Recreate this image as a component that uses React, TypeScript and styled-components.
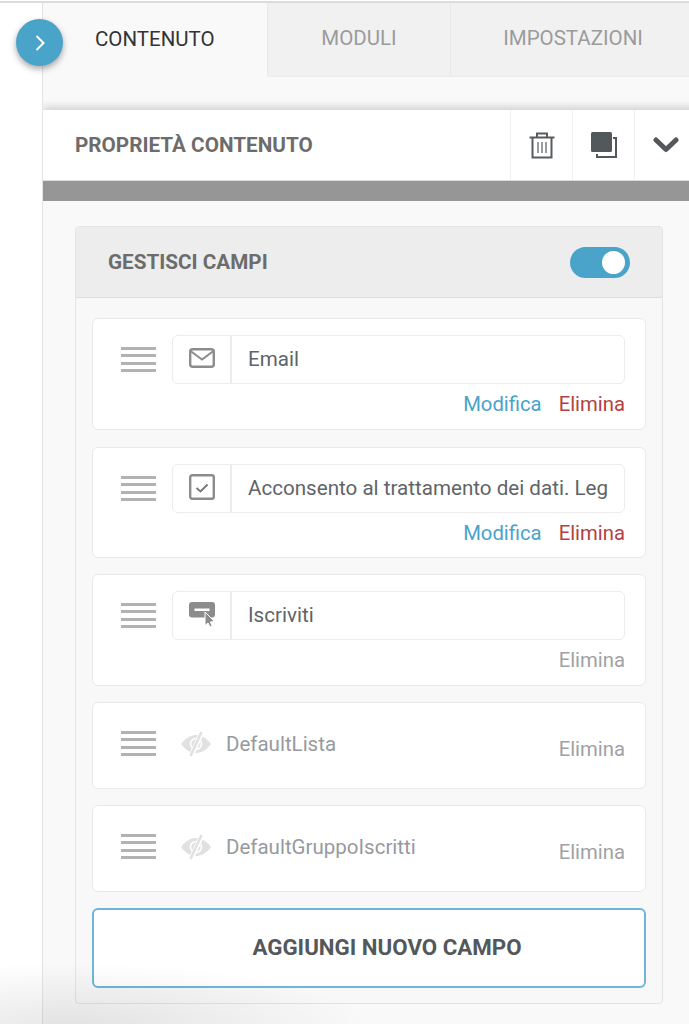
import React from 'react'
import styled, { createGlobalStyle } from 'styled-components';

const GlobalStyle = createGlobalStyle`
    html, body {
        margin: 0;
        padding: 0;
        background: #fff;
        font-family: Roboto, "Liberation Sans", sans-serif;
    }
    * {
        box-sizing: border-box;
    }
`;

const Page = styled.div`
    position: relative;
    width: 689px;
    height: 1024px;
    overflow: hidden;
    display: flex;
    background: #fff;
    border-top: 2px solid #dcdcdc;
    margin-top: 1px;
    &::after {
        content: '';
        position: absolute;
        left: 0;
        bottom: 0;
        width: 380px;
        height: 70px;
        background: radial-gradient(ellipse 300px 62px at 70px 100%, rgba(0,0,0,0.09), rgba(0,0,0,0));
        pointer-events: none;
    }
`;

const Rail = styled.div`
    flex: 0 0 42px;
`;

const ToggleRail = styled.button`
    position: absolute;
    left: 16px;
    top: 16px;
    width: 47px;
    height: 47px;
    border: none;
    padding: 0;
    border-radius: 50%;
    background: #4aa3c9;
    box-shadow: 0 3px 6px rgba(0, 0, 0, 0.35);
    display: flex;
    align-items: center;
    justify-content: center;
    z-index: 2;
`;

const Main = styled.div`
    flex: 1;
    min-width: 0;
    overflow: hidden;
    background: #f9f9f9;
    border-left: 1px solid #e4e4e4;
`;

const Tabs = styled.div`
    display: grid;
    grid-template-columns: 224px 183px 1fr;
    height: 74px;
`;

const Tab = styled.div<{ $active?: boolean; $shift?: number }>`
    display: flex;
    align-items: center;
    justify-content: ${props => props.$active ? 'flex-start' : 'center'};
    padding: 0 0 3px ${props => props.$active ? 52 : props.$shift || 0}px;
    font-size: 20.5px;
    color: ${props => props.$active ? '#333' : '#9b9b9b'};
    background: ${props => props.$active ? '#f9f9f9' : '#f1f1f1'};
    border-left: ${props => props.$active ? 'none' : '1px solid #e8e8e8'};
    border-bottom: ${props => props.$active ? 'none' : '1px solid #ececec'};
`;

const PropsBar = styled.div`
    margin-top: 33px;
    margin-right: -7px;
    height: 71px;
    background: #fff;
    display: flex;
    align-items: stretch;
    box-shadow: 0 -4px 7px rgba(0, 0, 0, 0.14);
    border-bottom: 1px solid #dcdcdc;
`;

const PropsTitle = styled.div`
    flex: 1;
    display: flex;
    align-items: center;
    padding-left: 32px;
    font-size: 20.7px;
    font-weight: 700;
    color: #6c6c6c;
`;

const PropsAction = styled.div`
    width: 62px;
    display: flex;
    align-items: center;
    justify-content: center;
    border-left: 1px solid #f0f0f0;
`;

const GreyBand = styled.div`
    height: 20px;
    background: #969696;
`;

const Content = styled.div`
    padding: 25px 26px 0 32px;
`;

const Card = styled.div`
    height: 778px;
    border: 1px solid #e3e3e3;
    border-radius: 4px;
    background: #f8f8f8;
`;

const CardHead = styled.div`
    height: 71px;
    background: #ededed;
    border-bottom: 1px solid #dedede;
    display: flex;
    align-items: center;
    justify-content: space-between;
    padding: 0 32px 0 32px;
    border-radius: 4px 4px 0 0;
`;

const CardTitle = styled.div`
    font-size: 20.7px;
    font-weight: 700;
    color: #6c6c6c;
`;

const Switch = styled.div`
    width: 60px;
    height: 31px;
    border-radius: 16px;
    background: #4aa3c9;
    display: flex;
    align-items: center;
    justify-content: flex-end;
    padding-right: 5px;
    &::after {
        content: '';
        width: 23px;
        height: 23px;
        border-radius: 50%;
        background: #fff;
    }
`;

const FieldList = styled.div`
    display: flex;
    flex-direction: column;
    padding: 20px 16px 0;
`;

const FieldRow = styled.div<{ $height: number; $gap: number }>`
    height: ${props => props.$height}px;
    margin-bottom: ${props => props.$gap}px;
    background: #fff;
    border: 1px solid #e9e9e9;
    border-radius: 6px;
    display: flex;
    padding: 16px 20px 0 28px;
`;

const Handle = styled.div`
    flex: 0 0 35px;
    height: 25px;
    margin-top: 12px;
    margin-right: 16px;
    display: flex;
    flex-direction: column;
    justify-content: space-between;
    span {
        display: block;
        height: 3px;
        background: #b2b2b2;
    }
`;

const FieldBody = styled.div`
    flex: 1;
    min-width: 0;
    display: flex;
    flex-direction: column;
`;

const InputGroup = styled.div`
    height: 49px;
    border: 1px solid #ececec;
    border-radius: 6px;
    display: flex;
`;

const InputIcon = styled.div`
    flex: 0 0 59px;
    border-right: 2px solid #ececec;
    display: flex;
    align-items: center;
    justify-content: center;
    padding-bottom: 3px;
`;

const InputText = styled.div`
    flex: 1;
    min-width: 0;
    margin-left: 16px;
    font-size: 20.6px;
    line-height: 47px;
    color: #5f6468;
    white-space: nowrap;
`;

const Links = styled.div`
    display: flex;
    justify-content: flex-end;
    gap: 17px;
    margin-top: 8px;
    font-size: 20.3px;
    line-height: 24px;
`;

const LinkText = styled.span<{ $tone: 'blue' | 'red' | 'grey' }>`
    color: ${props => props.$tone === 'blue' ? '#4aa3c9' : props.$tone === 'red' ? '#b5403f' : '#9ea2a5'};
`;

const HiddenBody = styled.div`
    flex: 1;
    display: flex;
    align-items: flex-start;
    justify-content: space-between;
    padding-top: 12px;
`;

const HiddenLabel = styled.div`
    display: flex;
    align-items: center;
    gap: 14px;
    margin-left: 8px;
    font-size: 20.5px;
    color: #969a9e;
    line-height: 24px;
`;

const HiddenAction = styled.div`
    font-size: 20.3px;
    line-height: 24px;
    margin-top: 6px;
`;

const AddButton = styled.button`
    display: block;
    width: 100%;
    height: 80px;
    background: #fff;
    border: 2px solid #6fb6d6;
    border-radius: 6px;
    font-family: inherit;
    font-size: 22.3px;
    font-weight: 700;
    color: #53585b;
    padding: 0 0 2px 36px;
`;

const Envelope = () => (
    <svg width="26" height="20" viewBox="0 0 26 20" fill="none" stroke="#8c8c8c" strokeWidth="2.4">
        <rect x="1.2" y="1.2" width="23.6" height="17.6" rx="2.5" />
        <path d="M1.5 3 L13 11.5 L24.5 3" strokeWidth="2" />
    </svg>
);

const CheckSquare = () => (
    <svg width="26" height="26" viewBox="0 0 26 26" fill="none" stroke="#8c8c8c">
        <rect x="1.2" y="1.2" width="23.6" height="23.6" rx="2" strokeWidth="2.4" />
        <path d="M7.5 14 L11.5 17.5 L18.5 10.5" strokeWidth="2" stroke="#7a7a7a" />
    </svg>
);

const ButtonCursor = () => (
    <svg width="26" height="25" viewBox="0 0 26 25">
        <rect x="0" y="0" width="26" height="15.5" rx="3" fill="#8c8c8c" />
        <rect x="5.5" y="6.5" width="15" height="2.5" fill="#fff" />
        <path d="M16 10 L16 23.5 L19 21 L21 25 L23.2 24 L21.4 20 L25.5 19.5 Z" fill="#8c8c8c" stroke="#fff" strokeWidth="1" />
    </svg>
);

const EyeOff = () => (
    <svg width="32" height="26" viewBox="0 0 32 26">
        <path d="M1 13 C7 5 13 4 16 4 C20 4 26 6 31 13 C26 20 20 22 16 22 C12 22 6 20 1 13 Z" fill="#e1e1e1" />
        <circle cx="16" cy="13" r="5.5" fill="none" stroke="#fff" strokeWidth="1.6" />
        <path d="M22 1 L11 25" stroke="#fff" strokeWidth="5" />
        <path d="M21.5 1 L10.5 25" stroke="#e1e1e1" strokeWidth="2.6" />
    </svg>
);

const Trash = () => (
    <svg width="26" height="27" viewBox="0 0 26 27" fill="none" stroke="#585c5f" strokeWidth="2">
        <path d="M0.5 5.5 H25.5" />
        <path d="M8 5 V1.5 H18 V5" />
        <path d="M3.5 5.5 V25.5 H22.5 V5.5" />
        <path d="M9 10 V21 M13 10 V21 M17 10 V21" strokeWidth="1.2" />
    </svg>
);

const Duplicate = () => (
    <svg width="26" height="26" viewBox="0 0 26 26">
        <path d="M6 22 V25 H25 V6 H22" fill="none" stroke="#53585b" strokeWidth="2" />
        <rect x="0" y="0" width="21" height="20" rx="1.5" fill="#53585b" />
    </svg>
);

const Chevron = () => (
    <svg width="26" height="16" viewBox="0 0 26 16" fill="none" stroke="#53585b" strokeWidth="5" strokeLinecap="round" strokeLinejoin="round">
        <path d="M3 3 L13 12.5 L23 3" />
    </svg>
);

const DragHandle = () => (
    <Handle><span /><span /><span /><span /></Handle>
);

interface FieldProps {
    icon: React.ReactNode,
    label: string,
    editable?: boolean,
    height: number,
    gap: number,
}

const Field = ({ icon, label, editable, height, gap }: FieldProps): React.JSX.Element => (
    <FieldRow $height={height} $gap={gap}>
        <DragHandle />
        <FieldBody>
            <InputGroup>
                <InputIcon>{icon}</InputIcon>
                <InputText>{label}</InputText>
            </InputGroup>
            <Links>
                {editable ? <LinkText $tone="blue">Modifica</LinkText> : null}
                <LinkText $tone={editable ? 'red' : 'grey'}>Elimina</LinkText>
            </Links>
        </FieldBody>
    </FieldRow>
);

const HiddenField = ({ label, gap }: { label: string, gap: number }): React.JSX.Element => (
    <FieldRow $height={87} $gap={gap}>
        <DragHandle />
        <HiddenBody>
            <HiddenLabel><EyeOff />{label}</HiddenLabel>
            <HiddenAction><LinkText $tone="grey">Elimina</LinkText></HiddenAction>
        </HiddenBody>
    </FieldRow>
);

const App = (): React.JSX.Element => (
    <Page>
        <GlobalStyle />
        <Rail />
        <ToggleRail>
            <svg width="12" height="18" viewBox="0 0 12 18" fill="none" stroke="#fff" strokeWidth="2">
                <path d="M2.5 2 L9.5 9 L2.5 16" />
            </svg>
        </ToggleRail>
        <Main>
            <Tabs>
                <Tab $active>CONTENUTO</Tab>
                <Tab>MODULI</Tab>
                <Tab $shift={6}>IMPOSTAZIONI</Tab>
            </Tabs>
            <PropsBar>
                <PropsTitle>PROPRIETÀ CONTENUTO</PropsTitle>
                <PropsAction><Trash /></PropsAction>
                <PropsAction><Duplicate /></PropsAction>
                <PropsAction><Chevron /></PropsAction>
            </PropsBar>
            <GreyBand />
            <Content>
                <Card>
                    <CardHead>
                        <CardTitle>GESTISCI CAMPI</CardTitle>
                        <Switch />
                    </CardHead>
                    <FieldList>
                        <Field icon={<Envelope />} label="Email" editable height={112} gap={17} />
                        <Field icon={<CheckSquare />} label="Acconsento al trattamento dei dati. Leg" editable height={111} gap={16} />
                        <Field icon={<ButtonCursor />} label="Iscriviti" height={112} gap={16} />
                        <HiddenField label="DefaultLista" gap={16} />
                        <HiddenField label="DefaultGruppoIscritti" gap={16} />
                        <AddButton>AGGIUNGI NUOVO CAMPO</AddButton>
                    </FieldList>
                </Card>
            </Content>
        </Main>
    </Page>
);

export default App;
